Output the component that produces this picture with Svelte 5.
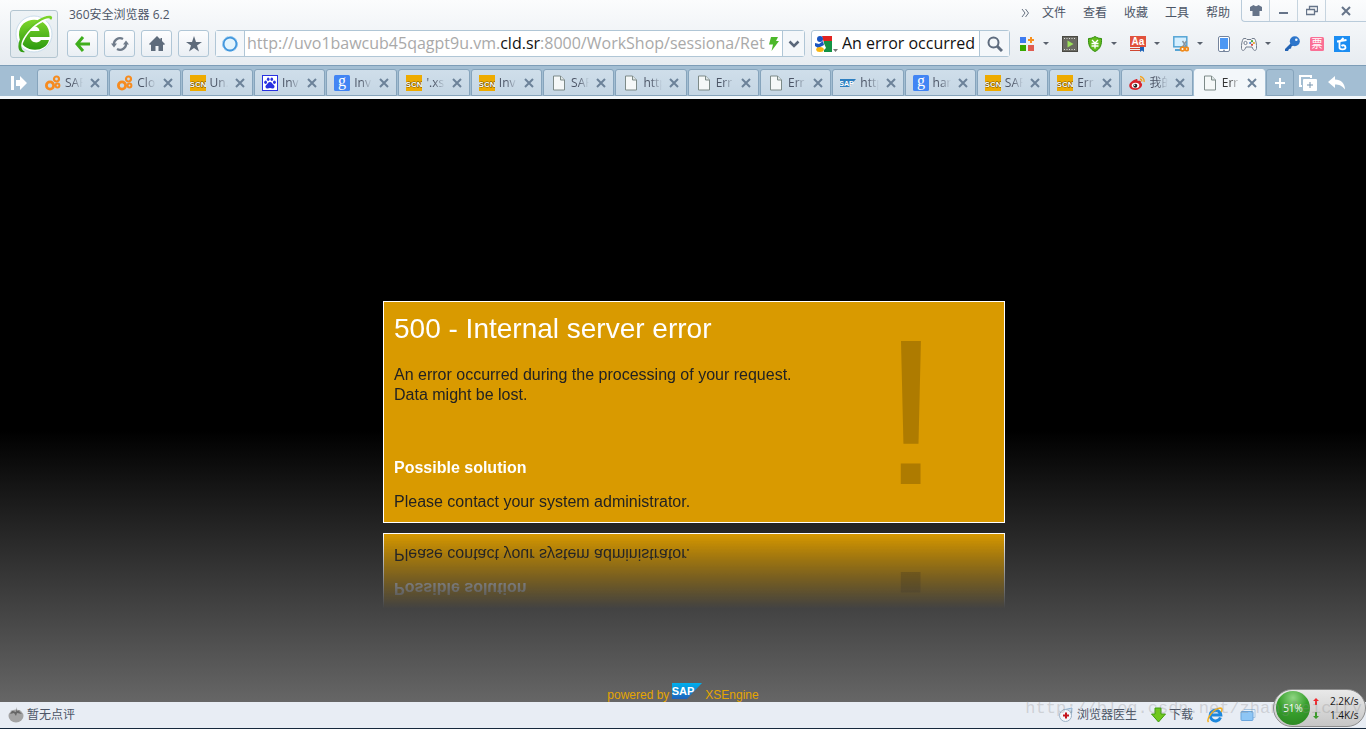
<script>
  const tabs = [
    { icon: 'gear', title: 'SAP' },
    { icon: 'gear', title: 'Clo' },
    { icon: 'scn', title: 'Un.' },
    { icon: 'baidu', title: 'Inv' },
    { icon: 'google', title: 'Inv' },
    { icon: 'scn', title: "'.xs" },
    { icon: 'scn', title: 'Inv' },
    { icon: 'page', title: 'SAP' },
    { icon: 'page', title: 'http' },
    { icon: 'page', title: 'Err' },
    { icon: 'page', title: 'Err' },
    { icon: 'sap', title: 'http' },
    { icon: 'google', title: 'har' },
    { icon: 'scn', title: 'SAP' },
    { icon: 'scn', title: 'Err' },
    { icon: 'weibo', title: '我的' },
    { icon: 'page', title: 'Err' },
  ];
  let active = $state(16);

  const menus = ['文件', '查看', '收藏', '工具', '帮助'];
  const tools = [
    { icon: 'apps', label: 'Apps', menu: true },
    { icon: 'film', label: 'Video' },
    { icon: 'shield', label: 'Shopping guard', menu: true },
    { icon: 'dict', label: 'Dictionary', menu: true },
    { icon: 'capture', label: 'Screen capture', menu: true },
    { icon: 'phone', label: 'Phone' },
    { icon: 'gamepad', label: 'Games', menu: true },
    { icon: 'key', label: 'Login' },
    { icon: 'ticket', label: 'Tickets' },
    { icon: 'note', label: 'Notes' },
  ];
  let query = $state('An error occurred');
</script>

{#snippet icon(name)}
  <svg class="icon" width="16" height="16" viewBox="0 0 16 16" aria-hidden="true">
    {#if name === 'gear'}
      <g fill="none" stroke="#f68b1f">
        <circle cx="5" cy="10.5" r="3.6" stroke-width="2.800" />
        <circle cx="11.5" cy="4" r="2.500" stroke-width="2.200" />
        <circle cx="12.5" cy="10.5" r="1.900" stroke-width="2" />
      </g>
    {:else if name === 'scn'}
      <rect width="16" height="16" fill="#eeab00" />
      <text x="8" y="11.5" text-anchor="middle" font-size="8" font-weight="700" fill="#fff" stroke="#6b4d00" stroke-width="1" paint-order="stroke" class="narrow">SCN</text>
    {:else if name === 'baidu'}
      <rect x=".5" y=".5" width="15" height="15" fill="#fff" stroke="#2932e1" />
      <g fill="#2932e1">
        <ellipse cx="3.6" cy="7.3" rx="1.4" ry="1.8" />
        <ellipse cx="6.2" cy="4.2" rx="1.3" ry="1.8" />
        <ellipse cx="9.8" cy="4.2" rx="1.3" ry="1.8" />
        <ellipse cx="12.4" cy="7.3" rx="1.4" ry="1.8" />
        <path d="M8 7c-2 0-2.4 2-4 3.2-1.300 1.300-.3 3.500 1.700 3.200l2.300-.3 2.300.3c2 .3 3-1.900 1.700-3.200C10.400 9 10 7 8 7z" />
      </g>
    {:else if name === 'google'}
      <rect width="16" height="16" rx="1.500" fill="#4285f4" />
      <text x="8" y="11" text-anchor="middle" font-size="16" fill="#fff" class="serif">g</text>
    {:else if name === 'page'}
      <path d="M2.500 1h7l4 4v10h-11z" fill="#f5f8f8" stroke="#7d8a88" />
      <path d="M9.500 1v4h4" fill="#dfe6e6" stroke="#7d8a88" />
    {:else if name === 'sap'}
      <path d="M0 4h16l-7 8H0z" fill="#2d7fc1" />
      <text x="6.500" y="10.500" text-anchor="middle" font-size="7" font-weight="700" fill="#fff">SAP</text>
    {:else if name === 'weibo'}
      <path d="M11 1.500a4.500 4.500 0 0 1 4 5.500M11 4a2.200 2.200 0 0 1 1.800 2.500" fill="none" stroke="#f5a11c" stroke-width="1.400" />
      <path d="M6.500 4.500c1.500-1 2.500 0 2 1.500 2-.8 4-.3 3.300 1.600 3.400 2-.3 7.400-5.300 7.400S0 12 .3 10 3.800 5 6.500 4.500z" fill="#d8232a" />
      <ellipse cx="6.500" cy="10.500" rx="3.800" ry="2.700" fill="#fff" />
      <circle cx="6.300" cy="10.700" r="2" fill="#222" />
      <circle cx="5.600" cy="10.200" r=".7" fill="#fff" />
    {:else if name === 'apps'}
      <rect x="1" y="1" width="6" height="6" fill="#3e7bf0" />
      <rect x="1" y="9" width="6" height="6" fill="#38a800" />
      <rect x="9" y="9" width="6" height="6" fill="#e05c50" />
      <path d="M12 1v6M9 4h6" stroke="#f7901e" stroke-width="2" />
    {:else if name === 'film'}
      <rect x=".5" y=".5" width="15" height="15" fill="#6a6a62" stroke="#4a4a44" />
      <path d="M2 2.500h12M2 13.500h12" stroke="#ddd" stroke-dasharray="1 1.500" />
      <path d="M5.500 4.500l6 3.500-6 3.500z" fill="#9be05a" />
    {:else if name === 'shield'}
      <path d="M8 .5c2.300 1.500 4.500 2 6.500 2 .3 6-1 10.500-6.500 13C2.500 13 1.200 8.500 1.500 2.500c2 0 4.200-.5 6.500-2z" fill="#62bb1c" stroke="#2f8d0c" />
      <path d="M5 4l3 3 3-3M8 7v5.500M4.500 7.500h7M4.500 10h7" fill="none" stroke="#fff" stroke-width="1.300" />
    {:else if name === 'dict'}
      <rect width="16" height="11" fill="#e1523d" />
      <path d="M0 12.500h10M0 14.500h10" stroke="#cf4631" />
      <text x="8" y="9" text-anchor="middle" font-size="10" font-weight="700" fill="#fff">Aa</text>
      <path d="M10 11h4v5l-2-1.500-2 1.500z" fill="#1b62b8" />
    {:else if name === 'capture'}
      <rect x=".8" y=".8" width="13" height="10" fill="#d5efff" stroke="#55a5d5" stroke-width="1.500" />
      <path d="M2 14h6" stroke="#55a5d5" stroke-width="2" />
      <path d="M9.500 5l4 6M13.500 5l-4 6" stroke="#8795a0" stroke-width="1.400" />
      <circle cx="9.500" cy="13" r="1.900" fill="#fff" stroke="#f08a1b" stroke-width="1.800" />
      <circle cx="13.700" cy="13" r="1.600" fill="#fff" stroke="#f08a1b" stroke-width="1.800" />
    {:else if name === 'phone'}
      <rect x="2.500" y=".5" width="11" height="15" rx="1.500" fill="#fff" stroke="#75849c" />
      <rect x="4" y="2" width="8" height="11" fill="#4d97f3" />
      <path d="M7 14.300h2" stroke="#75849c" />
    {:else if name === 'gamepad'}
      <path d="M2.500 2.500h2.500l1 1h4l1-1h2.500c1.500 2 2.300 6 2 10-.3 2.500-2.500 2.500-3.500.5l-1-2H5l-1 2c-1 2-3.200 2-3.500-.5-.3-4 .5-8 2-10z" fill="#f4f5f7" stroke="#747e8e" />
      <circle cx="4.500" cy="7" r="1.600" fill="#fff" stroke="#747e8e" />
      <circle cx="11" cy="5.200" r="1.100" fill="#46a631" />
      <circle cx="9.200" cy="7" r="1.100" fill="#3b74cf" />
      <circle cx="12.900" cy="7" r="1.100" fill="#e7a325" />
      <circle cx="11" cy="8.800" r="1.100" fill="#d63b2c" />
    {:else if name === 'key'}
      <path d="M7 7l-6 6v2h3l1-2 2-.5.5-2L10 9z" fill="#2263b4" />
      <circle cx="10.800" cy="5.200" r="5" fill="#2d76cb" />
      <circle cx="12.300" cy="3.700" r="1.300" fill="#eef5fc" />
    {:else if name === 'ticket'}
      <rect x="1" y="1" width="14" height="14" rx="1.500" fill="#fa6f95" />
      <text x="8" y="12" text-anchor="middle" font-size="11" fill="#fff">票</text>
    {:else if name === 'note'}
      <rect width="16" height="16" fill="#1b8df2" />
      <path d="M9.500 2L5.500 6v5.500c0 2.500 6 2.500 6 0 0-2-2.500-3-4-1.500M3 5.500l9.500-1.500" fill="none" stroke="#fff" stroke-width="1.800" />
    {/if}
  </svg>
{/snippet}

<div class="browser">
  <header>
    <button class="logo" aria-label="360安全浏览器">
      <svg width="40" height="42" viewBox="0 0 40 42" aria-hidden="true">
        <defs>
          <linearGradient id="leaf" x2="0" y2="1">
            <stop stop-color="#7ed62b" />
            <stop offset="1" stop-color="#2c9a10" />
          </linearGradient>
        </defs>
        <circle cx="20" cy="21" r="18" fill="#fff" stroke="#c9dceb" />
        <path d="M35.500 24H16c.5 6 8.500 7 11 3h8C32 41 6 40.500 5 22 4.500 2 36.500 1 35.500 24zM15.500 18h10c-.5-6-9-6-10 0z" fill="url(#leaf)" fill-rule="evenodd" />
        <path d="M6 33C10 20 20 10 34 4.500" fill="none" stroke="#fff" stroke-width="3.500" />
        <path d="M11 39C2 41 3 28 10 19 18 9 32 1 37 3c2 1 1 3 0 4-1-2-3-2-6-1C23 9 14 17 9 26c-3 6-2 11 2 13z" fill="url(#leaf)" />
      </svg>
    </button>

    <div class="bars">
      <div class="titlebar">
        <span class="title">360安全浏览器 6.2</span>
        <nav>
          <button class="more" aria-label="More">
            <svg width="8" height="8" viewBox="0 0 8 8"><path d="M1 0l3 4-3 4M4.500 0l3 4-3 4" fill="none" stroke="#667080" /></svg>
          </button>
          {#each menus as menu}
            <button>{menu}</button>
          {/each}
        </nav>
        <div class="window-controls">
          <button aria-label="Skin">
            <svg width="12" height="12" viewBox="0 0 12 12"><path d="M0 2l3.500-2c1.500 1.500 3.500 1.500 5 0L12 2v4H9.500v5h-7V6H0z" fill="#667489" /></svg>
          </button>
          <button aria-label="Minimize">
            <svg width="12" height="12" viewBox="0 0 12 12"><path d="M1 8h9" stroke="#667489" stroke-width="2" /></svg>
          </button>
          <button aria-label="Restore">
            <svg width="12" height="12" viewBox="0 0 12 12"><path d="M3.500 4V1.500h8v5H9M.5 4.500h8v5h-8z" fill="none" stroke="#667489" stroke-width="1.300" /></svg>
          </button>
          <button class="close-window" aria-label="Close">
            <svg width="12" height="12" viewBox="0 0 12 12"><path d="M2 2l8 8M10 2l-8 8" stroke="#667489" stroke-width="2" /></svg>
          </button>
        </div>
      </div>

      <div class="toolbar">
        <button class="nav-button" aria-label="Back">
          <svg width="16" height="16" viewBox="0 0 16 16"><path d="M8 1L2 8l6 7M2 8h13" fill="none" stroke="#3fae1d" stroke-width="3" /></svg>
        </button>
        <button class="nav-button" aria-label="Reload">
          <svg width="18" height="16" viewBox="0 0 18 16">
            <path d="M3 9a6 6 0 0 1 9-6M15 7a6 6 0 0 1-9 6" fill="none" stroke="#6f7b8a" stroke-width="2.300" />
            <path d="M0 7.500h6L3 11.500zM12 8.500h6l-3-4z" fill="#6f7b8a" />
          </svg>
        </button>
        <button class="nav-button" aria-label="Home">
          <svg width="16" height="16" viewBox="0 0 16 16"><path d="M8 0l3.500 3.500V2H13v3l3 3-1 1-1-.5V15H9.500v-5h-3v5H2V8.500L1 9 0 8z" fill="#5e6b7b" /></svg>
        </button>
        <button class="nav-button" aria-label="Favourites">
          <svg width="16" height="16" viewBox="0 0 16 16"><path d="M8 0l2 6h6l-5 3.500 2 6L8 12l-5 3.500 2-6L0 6h6z" fill="#5e6b7b" /></svg>
        </button>

        <div class="address">
          <button class="site" aria-label="Site information">
            <svg width="18" height="18" viewBox="0 0 18 18">
              <circle cx="9" cy="9" r="6.500" fill="#e3f4fd" stroke="#4095dc" stroke-width="2" />
              <circle cx="9" cy="9" r="7.500" fill="none" stroke="#8cc6f0" stroke-dasharray="3 2" />
            </svg>
          </button>
          <div class="url">http://uvo1bawcub45qagpt9u.vm.<b>cld.sr</b>:8000/WorkShop/sessiona/Ret</div>
          <button class="turbo" aria-label="Turbo mode">
            <svg width="10" height="14" viewBox="0 0 10 14"><path d="M2 0h7L7 4h3L2.500 14 4 7.500H0z" fill="#4cb82a" /></svg>
          </button>
          <button class="history" aria-label="History">
            <svg width="12" height="8" viewBox="0 0 12 8"><path d="M1.500 1.500L6 6l4.500-4.500" fill="none" stroke="#5b6779" stroke-width="2.500" /></svg>
          </button>
        </div>

        <div class="search">
          <button class="engine" aria-label="Search engine">
            <svg width="24" height="18" viewBox="0 0 24 18">
              <path d="M7 1h10v7H9z" fill="#e2231f" />
              <path d="M9 6h8v11H9z" fill="#149345" />
              <path d="M0 6h8l3 7-4 4H2z" fill="#fff" />
              <circle cx="5" cy="4" r="3" fill="#1a55c0" />
              <path d="M0 8l4 1 4-3 1 4-6 3-3-2z" fill="#1a55c0" />
              <ellipse cx="5" cy="14.500" rx="3.800" ry="2.500" fill="#f8b50f" />
              <path d="M18 14h5l-2.500 3z" fill="#777" />
            </svg>
          </button>
          <input type="text" aria-label="Search" bind:value={query} />
          <button class="go" aria-label="Go">
            <svg width="16" height="16" viewBox="0 0 16 16">
              <circle cx="6.500" cy="6.500" r="5" fill="none" stroke="#5f6c7e" stroke-width="2" />
              <path d="M10 10l5 5" stroke="#5f6c7e" stroke-width="3" />
            </svg>
          </button>
        </div>

        <div class="tools">
          {#each tools as tool}
            <button class:menu={tool.menu} aria-label={tool.label}>{@render icon(tool.icon)}</button>
          {/each}
        </div>
      </div>
    </div>
  </header>

  <div class="tabstrip">
    <button class="strip-button side" aria-label="Sidebar">
      <svg width="16" height="14" viewBox="0 0 16 14"><path d="M0 0h3v14H0zM5 4h4V0l7 7-7 7v-4H5z" fill="#fff" /></svg>
    </button>
    <div class="tabs">
      {#each tabs as tab, i}
        <div class="tab" class:active={active === i}>
          <button class="tab-select" onclick={() => (active = i)}>
            {@render icon(tab.icon)}
            <span class="tab-title">{tab.title}</span>
          </button>
          <button class="tab-close" aria-label="Close tab">
            <svg width="10" height="10" viewBox="0 0 10 10"><path d="M1 1l8 8M9 1L1 9" stroke="#6c8299" stroke-width="2" /></svg>
          </button>
        </div>
      {/each}
    </div>
    <button class="new-tab" aria-label="New tab">
      <svg width="12" height="12" viewBox="0 0 12 12"><path d="M6 1v10M1 6h10" stroke="#fff" stroke-width="2" /></svg>
    </button>
    <button class="strip-button" aria-label="Duplicate tab">
      <svg width="18" height="16" viewBox="0 0 18 16">
        <path d="M3 11H1V1h11v2" fill="none" stroke="#fff" stroke-width="2" />
        <rect x="4" y="4" width="14" height="12" rx="1" fill="#fff" />
        <path d="M11 7v6M8 10h6" stroke="#7896b0" />
      </svg>
    </button>
    <button class="strip-button" aria-label="Reopen closed tab">
      <svg width="17" height="14" viewBox="0 0 17 14"><path d="M0 6l7-6v3.500c6 0 10 4 10 10C14 9.500 11 8.500 7 8.500V12z" fill="#fff" /></svg>
    </button>
  </div>

  <main>
    <section class="card">
      <div class="message">
        <h1>500 - Internal server error</h1>
        <p class="details">An error occurred during the processing of your request.<br />Data might be lost.</p>
        <h2>Possible solution</h2>
        <p>Please contact your system administrator.</p>
      </div>
      <div class="mark" aria-hidden="true">!</div>
    </section>

    <footer>
      <span>powered by</span>
      <svg width="30" height="16" viewBox="0 0 30 16" role="img" aria-label="SAP">
        <defs>
          <linearGradient id="sap" x2="0" y2="1">
            <stop stop-color="#00b0ee" />
            <stop offset="1" stop-color="#1e62bb" />
          </linearGradient>
        </defs>
        <path d="M0 0h30L15 16H0z" fill="url(#sap)" />
        <text x="11" y="12" text-anchor="middle" font-size="11" font-weight="700" fill="#fff">SAP</text>
      </svg>
      <span>XSEngine</span>
    </footer>
  </main>

  <div class="statusbar">
    <button class="rating">
      <svg width="16" height="16" viewBox="0 0 16 16" aria-hidden="true">
        <ellipse cx="8" cy="9" rx="7.500" ry="6.500" fill="#a3a3a3" />
        <path d="M8 5L2 3l2 1-2 3 4-1 2 3 1-3 5 1-3-3 2-1-4 1V0z" fill="#666" />
      </svg>
      暂无点评
    </button>
    <button class="doctor">
      <svg width="16" height="16" viewBox="0 0 16 16" aria-hidden="true">
        <path d="M5 3l9-2-1 9z" fill="#cfe0f0" stroke="#8fb0cf" />
        <circle cx="7.500" cy="8.500" r="6" fill="#f4f7fa" stroke="#9eb4c9" />
        <path d="M8 5.500v6M5 8.500h6" stroke="#c4141c" stroke-width="2" />
      </svg>
      浏览器医生
    </button>
    <button class="download">
      <svg width="15" height="16" viewBox="0 0 15 16" aria-hidden="true"><path d="M4 1h6v6h4.500l-7 8L.5 7H4z" fill="#70c81e" stroke="#3f9c10" /></svg>
      下载
    </button>
    <button class="ie" aria-label="Compatibility mode">
      <svg width="16" height="16" viewBox="0 0 16 16">
        <path d="M13.500 10.500a5.300 5.300 0 1 1 .3-2.500H4" fill="none" stroke="#1e88dc" stroke-width="3" />
        <path d="M1.500 15C-1 12 6 2 13 1c3 0 2 3 1 4" fill="none" stroke="#f3b020" stroke-width="1.500" />
      </svg>
    </button>
    <button class="windows" aria-label="Windows">
      <svg width="16" height="14" viewBox="0 0 16 14">
        <path d="M4 1.500h11v8h-2" fill="#e6f1fb" stroke="#a6c4df" />
        <rect x="1" y="3.500" width="12" height="9" rx="1" fill="#8ec6f5" stroke="#6aa5dc" />
      </svg>
    </button>
    <div class="meter">
      <span class="memory">51%</span>
      <dl>
        <dt><svg width="6" height="7" viewBox="0 0 6 7" role="img" aria-label="Up"><path d="M3 0l3 3H4v4H2V3H0z" fill="#f0282d" /></svg></dt>
        <dd>2.2K/s</dd>
        <dt><svg width="6" height="7" viewBox="0 0 6 7" role="img" aria-label="Down"><path d="M3 7L0 4h2V0h2v4h2z" fill="#3c9b2c" /></svg></dt>
        <dd>1.4K/s</dd>
      </dl>
    </div>
    <span class="watermark">http://blog.csdn.net/zhangleicity</span>
  </div>
</div>

<style>
  :global(body) {
    margin: 0;
  }
  .browser {
    display: flex;
    flex-direction: column;
    min-height: 100vh;
    box-sizing: border-box;
    border-bottom: 1px solid #16283c;
    font: 12px/16px "Open Sans", "Noto Sans CJK SC", sans-serif;
    color: #4c5566;
  }
  button {
    display: flex;
    align-items: center;
    justify-content: center;
    padding: 0;
    border: 0;
    background: none;
    font: inherit;
    color: inherit;
    cursor: pointer;
  }
  svg {
    display: block;
    flex: none;
    font-family: "Liberation Sans", "Noto Sans CJK SC", sans-serif;
  }
  .serif {
    font-family: "Liberation Serif", serif;
  }
  .narrow {
    font-family: "Liberation Sans Narrow", "Liberation Sans", sans-serif;
  }

  header {
    display: flex;
    height: 65px;
    background: linear-gradient(#fbfcfd, #e7ecf1);
  }
  .logo {
    width: 48px;
    height: 48px;
    margin: 10px 9px 0 10px;
    box-sizing: border-box;
    border: 1px solid #b3c5d0;
    border-radius: 3px;
    background: linear-gradient(#eef3f6, #e2e9ee);
  }
  .bars {
    flex: 1;
    min-width: 0;
  }
  .titlebar {
    display: flex;
    height: 30px;
  }
  .title {
    flex: 1;
    padding: 7px 2px;
  }
  nav {
    display: flex;
    align-items: center;
    gap: 17px;
    height: 26px;
    padding-right: 11px;
  }
  nav .more {
    margin-right: -4px;
  }
  .window-controls {
    display: flex;
    height: 22px;
    box-sizing: border-box;
    border: solid #b9cbda;
    border-width: 0 0 1px 1px;
    border-radius: 0 0 0 4px;
  }
  .window-controls button {
    width: 28px;
    border-right: 1px solid #c6d4df;
    box-sizing: border-box;
  }
  .window-controls .close-window {
    width: 40px;
    border: 0;
  }

  .toolbar {
    display: flex;
    gap: 6px;
    height: 27px;
    padding-right: 16px;
  }
  .nav-button,
  .address,
  .search {
    box-sizing: border-box;
    border: 1px solid #b0c6d6;
    border-radius: 3px;
  }
  .nav-button {
    width: 31px;
    background: linear-gradient(#fdfdfe, #eaeff4);
  }
  .address,
  .search {
    display: flex;
    background: #fff;
    font-size: 16px;
    line-height: 25px;
  }
  .address {
    flex: 1;
    min-width: 0;
  }
  .site {
    width: 29px;
    border-right: 1px solid #b0c6d6;
    background: #f4f7fa;
  }
  .url {
    flex: 1;
    min-width: 0;
    margin-left: 2px;
    overflow: hidden;
    white-space: nowrap;
    color: #a9a9a9;
  }
  .url b {
    font-weight: 400;
    color: #111;
  }
  .turbo {
    width: 16px;
  }
  .history {
    width: 22px;
    border-left: 1px solid #b0c6d6;
    background: #f4f7fa;
  }
  .search {
    width: 199px;
  }
  .engine {
    width: 30px;
  }
  .search input {
    flex: 1;
    min-width: 0;
    padding: 0;
    border: 0;
    outline: 0;
    background: none;
    font: inherit;
    color: #111;
  }
  .go {
    width: 30px;
    border-left: 1px solid #b0c6d6;
    background: #f4f7fa;
  }
  .tools {
    display: flex;
    gap: 9px;
    margin-left: 3px;
  }
  .tools .menu::after {
    content: "";
    margin: 0 4px 0 8px;
    border: solid transparent;
    border-width: 3px 3px 0;
    border-top-color: #59616d;
  }

  .tabstrip {
    display: flex;
    height: 31px;
    box-sizing: border-box;
    padding-top: 3px;
    border-top: 1px solid #7d9db7;
    background: #a3bed3;
    box-shadow: 0 3px #f3f7fa;
    margin-bottom: 3px;
  }
  .strip-button {
    width: 28px;
  }
  .strip-button.side {
    width: 37px;
  }
  .strip-button:last-child {
    margin-right: 16px;
  }
  .tabs {
    display: flex;
    flex: 1;
    min-width: 0;
  }
  .tab {
    display: flex;
    flex: 1;
    min-width: 0;
    box-sizing: border-box;
    margin-right: 1px;
    border: 1px solid #86a4bc;
    border-radius: 3px 3px 0 0;
    background: linear-gradient(#cfdeea, #c5d6e4);
  }
  .tab.active {
    border-color: #f3f7fa;
    background: #f3f7fa;
    color: #333;
  }
  .tab-select {
    flex: 1;
    gap: 4px;
    min-width: 0;
    padding-left: 7px;
  }
  .tab-title {
    flex: 1;
    overflow: hidden;
    text-align: left;
    white-space: nowrap;
    mask-image: linear-gradient(90deg, #000 40%, transparent);
  }
  .tab-close {
    width: 24px;
  }
  .new-tab {
    width: 28px;
    box-sizing: border-box;
    border: 1px solid #86a4bc;
    border-radius: 3px 3px 0 0;
  }

  main {
    display: flex;
    flex: 1;
    flex-direction: column;
    align-items: center;
    justify-content: space-between;
    padding-top: 202px;
    background: linear-gradient(#000 55%, #666);
    font-family: "Liberation Sans", Arial, sans-serif;
  }
  .card {
    display: flex;
    width: 622px;
    height: 222px;
    box-sizing: border-box;
    margin-left: 22px;
    padding: 0 80px 0 10px;
    border: 1px solid #fff;
    background: #d99a00;
    font-size: 16px;
    line-height: 20px;
    color: #222;
    -webkit-box-reflect: below 10px linear-gradient(transparent 66%, #000);
  }
  .message {
    flex: 1;
  }
  h1 {
    margin: 11px 0 20px;
    font-size: 28px;
    font-weight: 400;
    line-height: 32px;
    color: #fff;
  }
  h2 {
    margin: 0 0 14px;
    font-size: 16px;
    color: #fff;
  }
  p {
    margin: 0;
  }
  .details {
    min-height: 93px;
  }
  .mark {
    width: 42px;
    font-size: 208px;
    line-height: 220px;
    color: #ae7b00;
  }
  footer {
    display: flex;
    align-items: flex-end;
    gap: 3px;
    height: 19px;
    line-height: 14px;
    color: #e5a500;
  }
  footer svg {
    align-self: flex-start;
  }

  .statusbar {
    position: relative;
    display: flex;
    align-items: center;
    height: 26px;
    padding: 0 110px 0 8px;
    background: #e8edf4;
  }
  .statusbar button {
    gap: 3px;
  }
  .statusbar .doctor {
    margin-left: auto;
  }
  .download,
  .ie {
    margin-left: 14px;
  }
  .windows {
    margin-left: 17px;
  }
  .watermark {
    position: absolute;
    right: 4px;
    bottom: 9px;
    font: 17px/20px "Liberation Mono", monospace;
    white-space: nowrap;
    color: rgba(140, 140, 140, 0.3);
    pointer-events: none;
  }
  .meter {
    position: absolute;
    right: 0;
    bottom: 1px;
    display: flex;
    align-items: center;
    width: 93px;
    height: 38px;
    box-sizing: border-box;
    padding: 2px;
    border: 1px solid #8d8d8d;
    border-radius: 19px;
    background: linear-gradient(#e9e9e9, #c6c6c6);
  }
  .memory {
    width: 34px;
    height: 34px;
    border-radius: 50%;
    background: radial-gradient(circle at 50% 20%, #8fd583, #37a02c 45%, #2a8122);
    font-size: 10px;
    line-height: 34px;
    text-align: center;
    color: #fff;
  }
  dl {
    display: grid;
    grid-template-columns: 6px auto;
    column-gap: 11px;
    align-items: center;
    margin: 0 0 0 3px;
    font-size: 10px;
    line-height: 14px;
    color: #111;
  }
  dd {
    margin: 0;
  }
</style>
